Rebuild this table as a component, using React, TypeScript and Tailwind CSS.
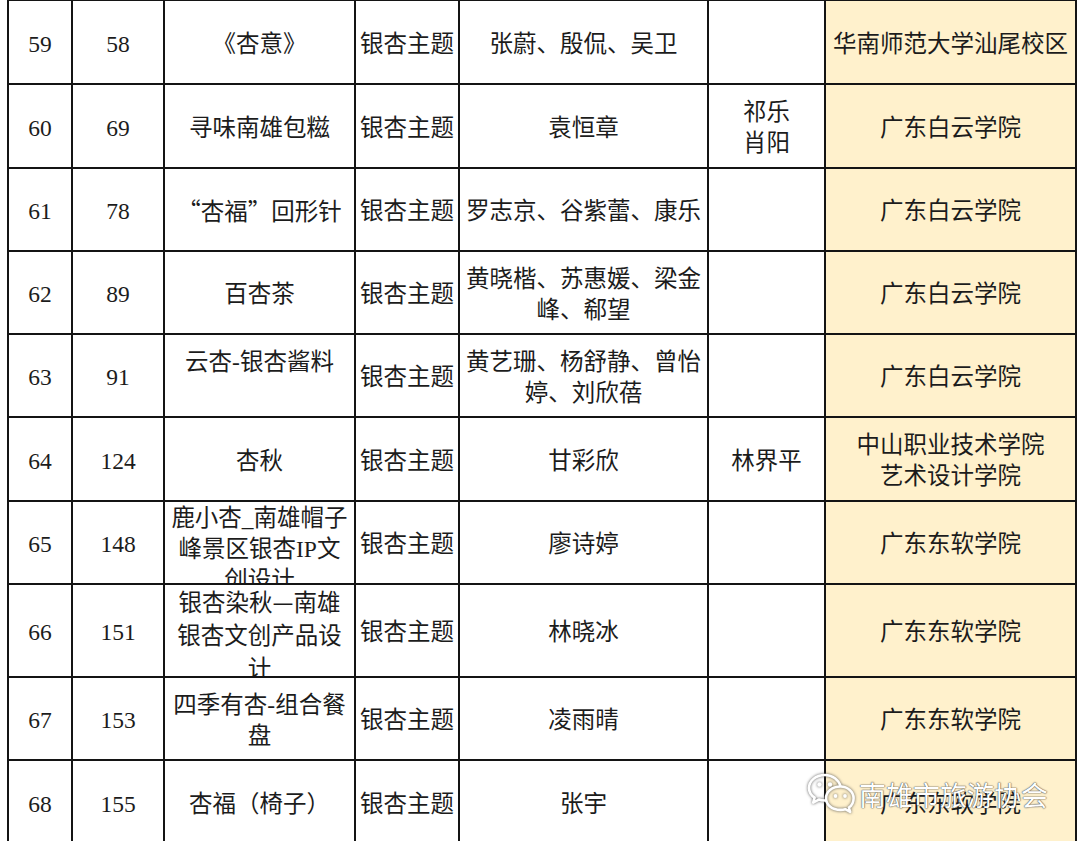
import React from 'react';

type Row = {
  no: string;
  id: string;
  title: React.ReactNode;
  topic: string;
  authors: React.ReactNode;
  tutor: React.ReactNode;
  school: React.ReactNode;
  h: string;
  topTitle?: boolean;
};

const cjk = { fontFamily: '"Noto Sans CJK SC", sans-serif' };

const rows: Row[] = [
  { no: '59', id: '58', title: '《杏意》', topic: '银杏主题', authors: '张蔚、殷侃、吴卫', tutor: '', school: '华南师范大学汕尾校区', h: 'h-[84px]' },
  { no: '60', id: '69', title: '寻味南雄包糍', topic: '银杏主题', authors: '袁恒章', tutor: <>祁乐<br />肖阳</>, school: '广东白云学院', h: 'h-[84px]' },
  { no: '61', id: '78', title: <span style={cjk}>“杏福”回形针</span>, topic: '银杏主题', authors: '罗志京、谷紫蕾、康乐', tutor: '', school: '广东白云学院', h: 'h-[83px]' },
  { no: '62', id: '89', title: '百杏茶', topic: '银杏主题', authors: '黄晓楷、苏惠媛、梁金峰、郗望', tutor: '', school: '广东白云学院', h: 'h-[83px]' },
  { no: '63', id: '91', title: <>云杏-银杏酱料<br />{'\u00a0'}</>, topic: '银杏主题', authors: '黄艺珊、杨舒静、曾怡婷、刘欣蓓', tutor: '', school: '广东白云学院', h: 'h-[83px]' },
  { no: '64', id: '124', title: '杏秋', topic: '银杏主题', authors: '甘彩欣', tutor: '林界平', school: <>中山职业技术学院<br />艺术设计学院</>, h: 'h-[84px]' },
  { no: '65', id: '148', title: '鹿小杏_南雄帽子峰景区银杏IP文创设计', topic: '银杏主题', authors: '廖诗婷', tutor: '', school: '广东东软学院', h: 'h-[83px]', topTitle: true },
  { no: '66', id: '151', title: <span style={cjk}>银杏染秋—南雄银杏文创产品设计</span>, topic: '银杏主题', authors: '林晓冰', tutor: '', school: '广东东软学院', h: 'h-[93px]', topTitle: true },
  { no: '67', id: '153', title: '四季有杏-组合餐盘', topic: '银杏主题', authors: '凌雨晴', tutor: '', school: '广东东软学院', h: 'h-[83px]' },
  { no: '68', id: '155', title: '杏福（椅子）', topic: '银杏主题', authors: '张宇', tutor: '', school: '广东东软学院', h: 'h-[84px]' },
];

const base = 'border-r-2 border-b-2 border-[#141414] flex justify-center text-center px-[4px] overflow-hidden break-all';
const cell = `${base} items-center pt-[4px]`;
const topCell = `${base} items-start pt-[1px]`;

function WeChatMark() {
  return (
    <div className="absolute left-[806px] top-[772px] flex items-center gap-[3px] pointer-events-none">
      <svg width="50" height="44" viewBox="0 0 50 44" style={{ filter: 'drop-shadow(0 0 1.5px rgba(60,60,60,0.85))' }}>
        <g fill="none" stroke="#ffffff" strokeWidth="2.6" strokeLinejoin="round">
          <path d="M19 3C9.6 3 3 9 3 16c0 4 2.2 7.4 5.6 9.7L7.2 30.6l5.6-3c1.9.6 4 .9 6.2.9.6 0 1.1 0 1.6-.1" />
          <path d="M34.5 14.5C26 14.5 20 19.8 20 26.2s6 11.7 14.5 11.7c1.7 0 3.3-.2 4.8-.7l4.8 2.6-1.2-4.3c3-2.1 4.7-5.1 4.7-9.3 0-6.4-5.9-11.7-13.1-11.7z" />
          <path d="M34.5 14.5C33 8 26.5 3 19 3" />
        </g>
        <g fill="#ffffff">
          <circle cx="13.5" cy="12.5" r="2.2" />
          <circle cx="24" cy="12.5" r="2.2" />
          <circle cx="29.5" cy="24" r="1.9" />
          <circle cx="39" cy="24" r="1.9" />
        </g>
      </svg>
      <span
        className="text-[27px] leading-none text-white"
        style={{ ...cjk, textShadow: '0 0 1.5px rgba(50,50,50,0.9), 0 0 1px rgba(50,50,50,0.9)' }}
      >
        南雄市旅游协会
      </span>
    </div>
  );
}

export default function App() {
  return (
    <div className="relative w-[1080px] h-[841px] overflow-hidden bg-white">
      <div
        className="ml-[7px] mt-[-1px] w-[1070px] border-l-2 border-t-2 border-[#141414] text-[23.5px] leading-[31px] text-[#1c1c1c]"
        style={{ fontFamily: '"Liberation Serif", "Noto Sans CJK SC", serif' }}
      >
        {rows.map((r) => (
          <div key={r.no} className={`grid grid-cols-[64px_92px_191px_104px_249px_117px_251px] ${r.h}`}>
            <div className={cell}>{r.no}</div>
            <div className={cell}>{r.id}</div>
            <div className={r.topTitle ? topCell : cell}>
              <div>{r.title}</div>
            </div>
            <div className={`${cell} px-[2px]`}>{r.topic}</div>
            <div className={cell}>
              <div>{r.authors}</div>
            </div>
            <div className={cell}>
              <div>{r.tutor}</div>
            </div>
            <div className={`${cell} bg-[#fff1cc]`}>
              <div>{r.school}</div>
            </div>
          </div>
        ))}
      </div>
      <WeChatMark />
    </div>
  );
}
